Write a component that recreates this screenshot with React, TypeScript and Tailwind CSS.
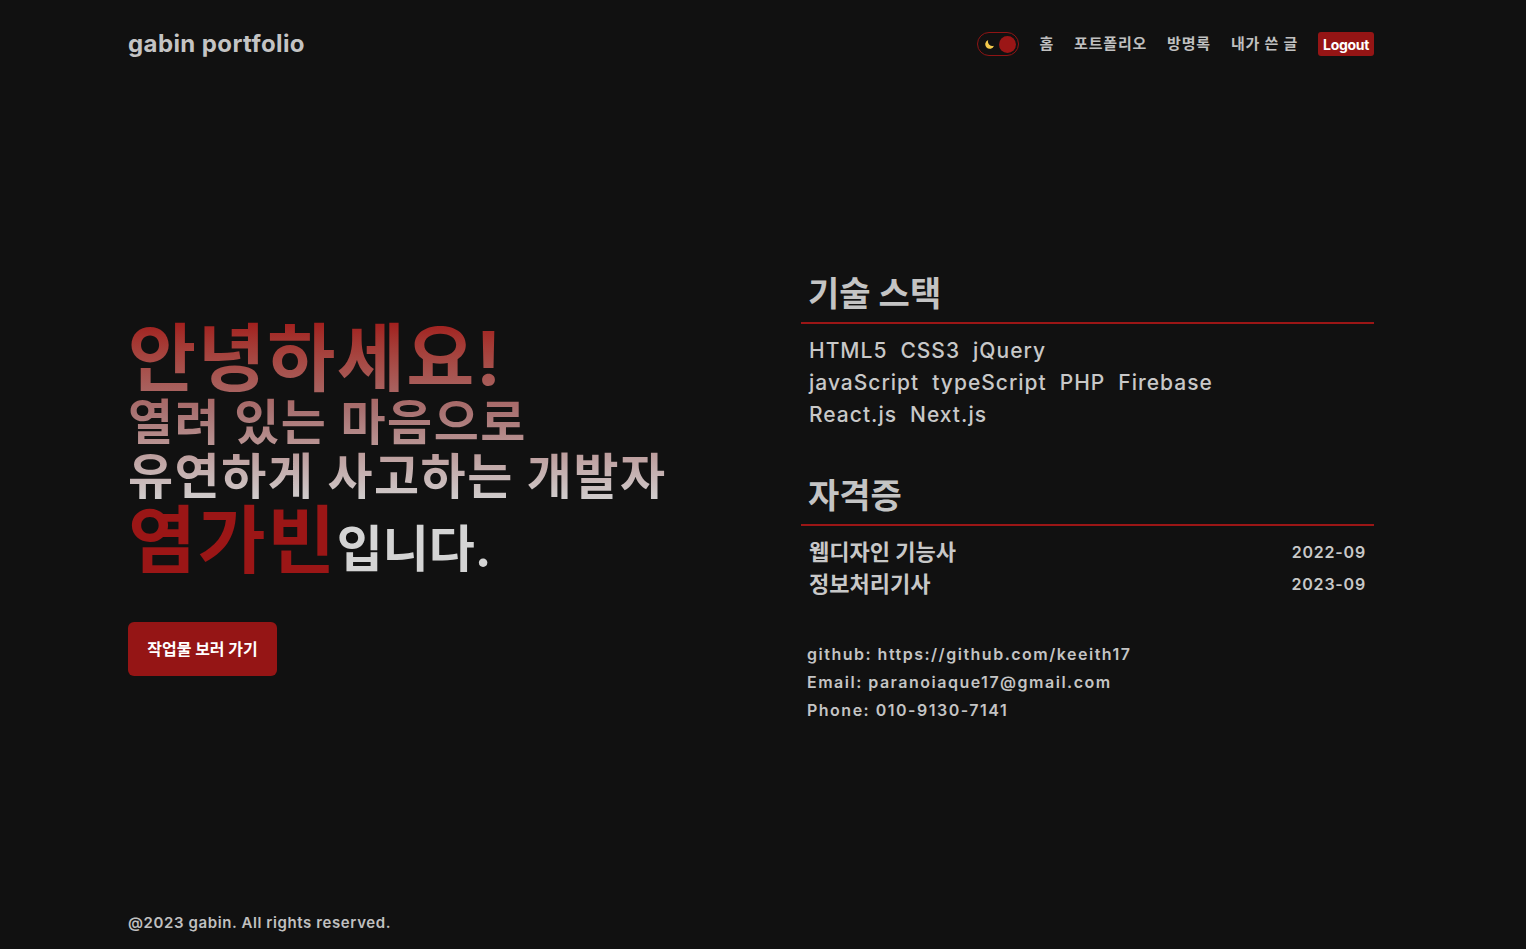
const font = "font-['Inter','Noto_Sans_CJK_KR','Noto_Sans',sans-serif]";

const stacks = [
  ["HTML5", "CSS3", "jQuery"],
  ["javaScript", "typeScript", "PHP", "Firebase"],
  ["React.js", "Next.js"],
];

const licenses = [
  { name: "웹디자인 기능사", date: "2022-09" },
  { name: "정보처리기사", date: "2023-09" },
];

function ThemeToggle() {
  return (
    <div className="w-[42px] h-[24px] rounded-full border border-[#8f1414] flex items-center justify-between pl-[6px] pr-[2px]">
      <svg width="12" height="12" viewBox="0 0 24 24">
        <path d="M20 15.5A9 9 0 0 1 8.5 4a9 9 0 1 0 11.5 11.5z" fill="#f2c94c" />
      </svg>
      <span className="w-[17px] h-[17px] rounded-full bg-[#9b1616]" />
    </div>
  );
}

export default function App() {
  return (
    <div className={`${font} min-h-[949px] bg-[#111111] text-[#c8c8c8] flex flex-col`}>
      {/* 헤더 */}
      <header className="h-[88px] pl-[128px] pr-[152px] flex items-center justify-between">
        <h1 className="text-[24px] font-bold text-[#c4c4c4] tracking-[0.4px]">gabin portfolio</h1>
        <nav className="flex items-center gap-[20px] text-[15px] font-bold text-[#c0c0c0] tracking-[0.8px]">
          <ThemeToggle />
          <span>홈</span>
          <span>포트폴리오</span>
          <span>방명록</span>
          <span>내가 쓴 글</span>
          <button className="bg-[#951515] text-white px-[5px] h-[24px] rounded-[3px] text-[14px] font-bold tracking-[-0.3px]">
            Logout
          </button>
        </nav>
      </header>

      {/* 메인 */}
      <main className="flex-1 pl-[128px] pr-[152px] flex items-center justify-between">
        <div className="flex flex-col pt-[8px]">
          <h2 className="font-bold">
            <span className="block bg-gradient-to-b from-[#a11a1a] via-[#a87272] to-[#d2d2d2] bg-clip-text text-transparent">
              <span className="block text-[74px] leading-[76px] tracking-[1.5px]">안녕하세요!</span>
              <span className="block text-[49px] leading-[54px] tracking-[1.5px]">열려 있는 마음으로</span>
              <span className="block text-[49px] leading-[54px] tracking-[1.5px]">유연하게 사고하는 개발자</span>
            </span>
            <span className="block leading-[72px]">
              <span className="text-[74px] text-[#9b1616] tracking-[1.5px]">염가빈</span>
              <span className="text-[50px] text-[#d4d4d4]">입니다.</span>
            </span>
          </h2>
          <button className="mt-[25px] w-[149px] h-[54px] rounded-md bg-[#951515] text-white text-[16px] font-bold">
            작업물 보러 가기
          </button>
        </div>

        <div className="w-[573px] flex flex-col pt-[10px]">
          <h3 className="text-[34px] font-bold pl-[7px] leading-[42px] text-[#c4c4c4]">기술 스택</h3>
          <div className="h-[2px] bg-[#9b1616] mt-[7px]" />
          <div className="mt-[11px] pl-[8px] text-[21px] font-medium leading-[32px] tracking-[1px] text-[#c8c8c8]">
            {stacks.map((row, i) => (
              <div key={i} className="flex gap-[13px]">
                {row.map((s) => (
                  <span key={s}>{s}</span>
                ))}
              </div>
            ))}
          </div>

          <h3 className="mt-[44px] text-[34px] font-bold pl-[7px] leading-[42px] text-[#c4c4c4]">자격증</h3>
          <div className="h-[2px] bg-[#9b1616] mt-[7px]" />
          <div className="mt-[10px] pl-[8px] pr-[8px] leading-[32px]">
            {licenses.map((l) => (
              <div key={l.name} className="flex justify-between items-center">
                <span className="text-[22px] font-bold">{l.name}</span>
                <span className="text-[16px] font-semibold tracking-[0.8px]">{l.date}</span>
              </div>
            ))}
          </div>

          <div className="mt-[40px] pl-[6px] text-[16px] font-semibold leading-[28px] tracking-[1.5px] text-[#c4c4c4]">
            <p>github: https://github.com/keeith17</p>
            <p>Email: paranoiaque17@gmail.com</p>
            <p>Phone: 010-9130-7141</p>
          </div>
        </div>
      </main>

      {/* 푸터 */}
      <footer className="h-[50px] pt-[13px] pl-[128px] text-[15px] font-semibold tracking-[0.6px] text-[#c0c0c0]">
        @2023 gabin. All rights reserved.
      </footer>
    </div>
  );
}
